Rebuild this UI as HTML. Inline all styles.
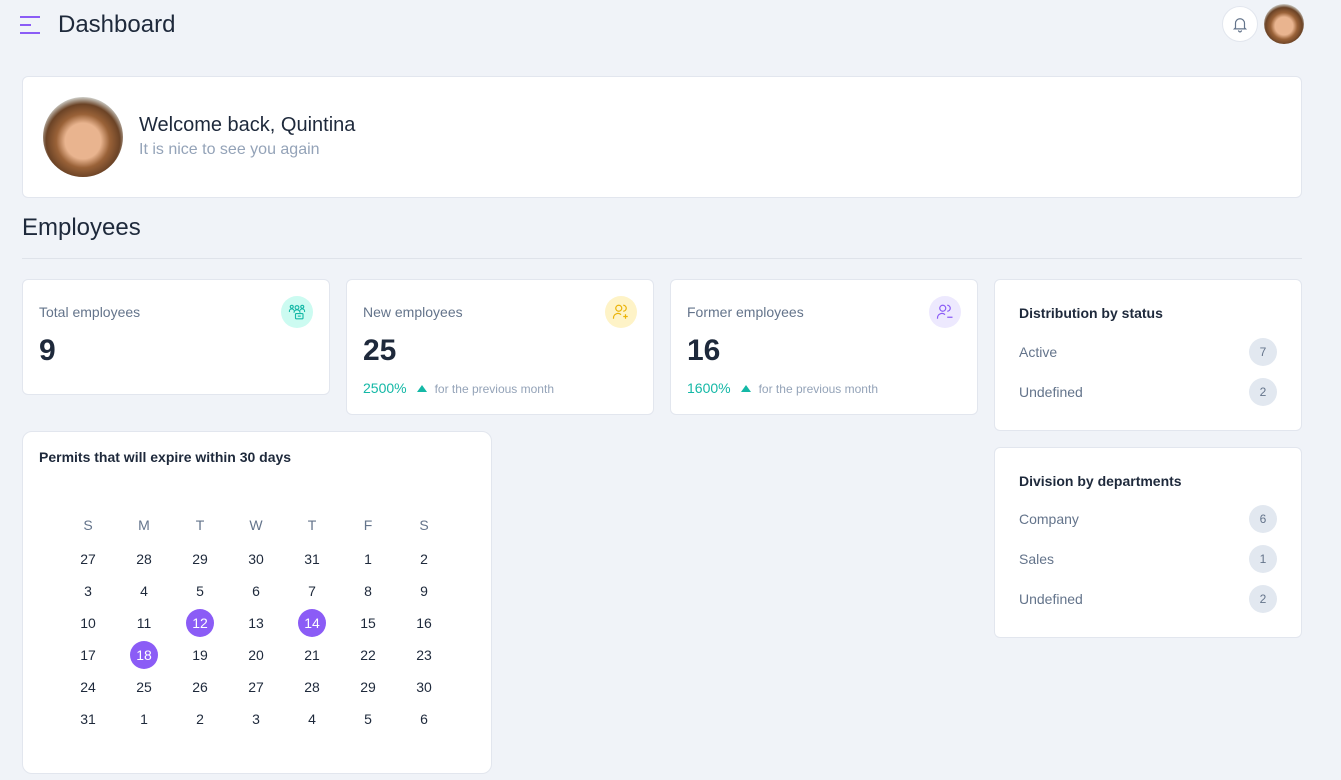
<!DOCTYPE html><html><head><style>
*{box-sizing:border-box;margin:0;padding:0}
body{width:1341px;height:780px;background:#f0f3f8;font-family:"Liberation Sans",sans-serif;position:relative;overflow:hidden;color:#1f2937}
.a{position:absolute}
.card{position:absolute;background:#fff;border:1px solid #e2e6ee;border-radius:6px}
.av{border-radius:50%;background:radial-gradient(circle at 50% 55%,#e9b48f 0 30%,#9a6238 45%,#6b4326 62%,#d8dcd8 75%)}
.lbl{font-size:14px;color:#64748b}
.num{font-size:30px;font-weight:bold;color:#1e293b}
.ic{position:absolute;width:32px;height:32px;border-radius:50%;display:flex;align-items:center;justify-content:center}
.pct{font-size:14px;color:#14b8a6}
.sm{font-size:12px;color:#94a3b8}
.tri{display:inline-block;width:0;height:0;border-left:5px solid transparent;border-right:5px solid transparent;border-bottom:7px solid #14b8a6;margin:0 8px 1px 10px}
.row{position:absolute;left:24px;right:24px;display:flex;justify-content:space-between;align-items:center;font-size:14px;color:#64748b}
.bd{width:28px;height:28px;border-radius:50%;background:#e2e8f0;font-size:12px;color:#64748b;display:flex;align-items:center;justify-content:center}
.h{font-size:14px;font-weight:bold;color:#1e293b}
.cal{position:absolute;width:28px;height:28px;margin-left:-14px;margin-top:-14px;display:flex;align-items:center;justify-content:center;font-size:14px;color:#1e293b;border-radius:50%}
.sel{background:#8b5cf6;color:#fff}
</style></head><body>
<div class="a" style="left:20px;top:16px;width:20px;height:2px;background:#8b5cf6"></div>
<div class="a" style="left:20px;top:24px;width:11px;height:2px;background:#8b5cf6"></div>
<div class="a" style="left:20px;top:32px;width:20px;height:2px;background:#8b5cf6"></div>
<div class="a" style="left:58px;top:11px;font-size:24px;color:#1e293b">Dashboard</div>
<div class="a" style="left:1222px;top:6px;width:36px;height:36px;border-radius:50%;background:#fff;border:1px solid #e2e6ee;display:flex;align-items:center;justify-content:center"><svg width="18" height="18" viewBox="0 0 24 24" fill="none" stroke="#64748b" stroke-width="1.6"><path d="M6 17V11a6 6 0 0 1 12 0v6l1.5 1.5h-15zM10 20.5a2 2 0 0 0 4 0"/></svg></div>
<div class="a av" style="left:1264px;top:4px;width:40px;height:40px"></div>
<div class="card" style="left:22px;top:76px;width:1280px;height:122px"></div>
<div class="a av" style="left:43px;top:97px;width:80px;height:80px"></div>
<div class="a" style="left:139px;top:114px;font-size:20px;color:#1e293b">Welcome back, Quintina</div>
<div class="a" style="left:139px;top:141px;font-size:16px;color:#94a3b8">It is nice to see you again</div>
<div class="a" style="left:22px;top:214px;font-size:24px;color:#1e293b">Employees</div>
<div class="a" style="left:22px;top:258px;width:1280px;height:1px;background:#dfe3ea"></div>

<div class="card" style="left:22px;top:279px;width:308px;height:116px">
<div class="a lbl" style="left:16px;top:24px">Total employees</div>
<div class="ic" style="left:258px;top:16px;background:#ccfbf1"><svg width="18" height="18" viewBox="0 0 24 24" fill="none" stroke="#14b8a6" stroke-width="1.5"><circle cx="12" cy="6" r="2.5"/><circle cx="5" cy="5" r="2"/><circle cx="19" cy="5" r="2"/><path d="M2 12a3 3 0 0 1 6-2M22 12a3 3 0 0 0-6-2M8 13a4 4 0 0 1 8 0"/><rect x="10" y="14" width="10" height="7" rx="1"/><path d="M13 17.5h4"/></svg></div>
<div class="a num" style="left:16px;top:54px">9</div></div>

<div class="card" style="left:346px;top:279px;width:308px;height:136px">
<div class="a lbl" style="left:16px;top:24px">New employees</div>
<div class="ic" style="left:258px;top:16px;background:#fef3c7"><svg width="18" height="18" viewBox="0 0 24 24" fill="none" stroke="#eab308" stroke-width="1.6"><circle cx="9" cy="7" r="4"/><path d="M2 21v-1a6 6 0 0 1 10-4.5M15 3a4 4 0 0 1 0 8M18 15v6M15 18h6"/></svg></div>
<div class="a num" style="left:16px;top:54px">25</div>
<div class="a" style="left:16px;top:100px"><span class="pct">2500%</span><span class="tri"></span><span class="sm">for the previous month</span></div></div>

<div class="card" style="left:670px;top:279px;width:308px;height:136px">
<div class="a lbl" style="left:16px;top:24px">Former employees</div>
<div class="ic" style="left:258px;top:16px;background:#ede9fe"><svg width="18" height="18" viewBox="0 0 24 24" fill="none" stroke="#8b5cf6" stroke-width="1.6"><circle cx="9" cy="7" r="4"/><path d="M2 21v-1a6 6 0 0 1 10-4.5M15 3a4 4 0 0 1 0 8M15 19h7"/></svg></div>
<div class="a num" style="left:16px;top:54px">16</div>
<div class="a" style="left:16px;top:100px"><span class="pct">1600%</span><span class="tri"></span><span class="sm">for the previous month</span></div></div>

<div class="card" style="left:994px;top:279px;width:308px;height:152px">
<div class="a h" style="left:24px;top:25px">Distribution by status</div>
<div class="row" style="top:58px"><span>Active</span><span class="bd">7</span></div>
<div class="row" style="top:98px"><span>Undefined</span><span class="bd">2</span></div></div>

<div class="card" style="left:994px;top:447px;width:308px;height:191px">
<div class="a h" style="left:24px;top:25px">Division by departments</div>
<div class="row" style="top:57px"><span>Company</span><span class="bd">6</span></div>
<div class="row" style="top:97px"><span>Sales</span><span class="bd">1</span></div>
<div class="row" style="top:137px"><span>Undefined</span><span class="bd">2</span></div></div>

<div class="card" style="left:22px;top:431px;width:470px;height:343px;border-radius:10px">
<div class="a h" style="left:16px;top:17px">Permits that will expire within 30 days</div></div>
<div id="c"></div>
<script>
var d=["S","M","T","W","T","F","S"],rows=[[27,28,29,30,31,1,2],[3,4,5,6,7,8,9],[10,11,12,13,14,15,16],[17,18,19,20,21,22,23],[24,25,26,27,28,29,30],[31,1,2,3,4,5,6]],h="";
d.forEach(function(x,i){h+='<div class="cal" style="left:'+(88+56*i)+'px;top:525px;color:#64748b">'+x+'</div>'});
rows.forEach(function(r,j){r.forEach(function(x,i){var s=(j==2&&(i==2||i==4))||(j==3&&i==1);h+='<div class="cal'+(s?' sel':'')+'" style="left:'+(88+56*i)+'px;top:'+(559+32*j)+'px">'+x+'</div>'})});
document.getElementById("c").innerHTML=h;
</script>
</body></html>
